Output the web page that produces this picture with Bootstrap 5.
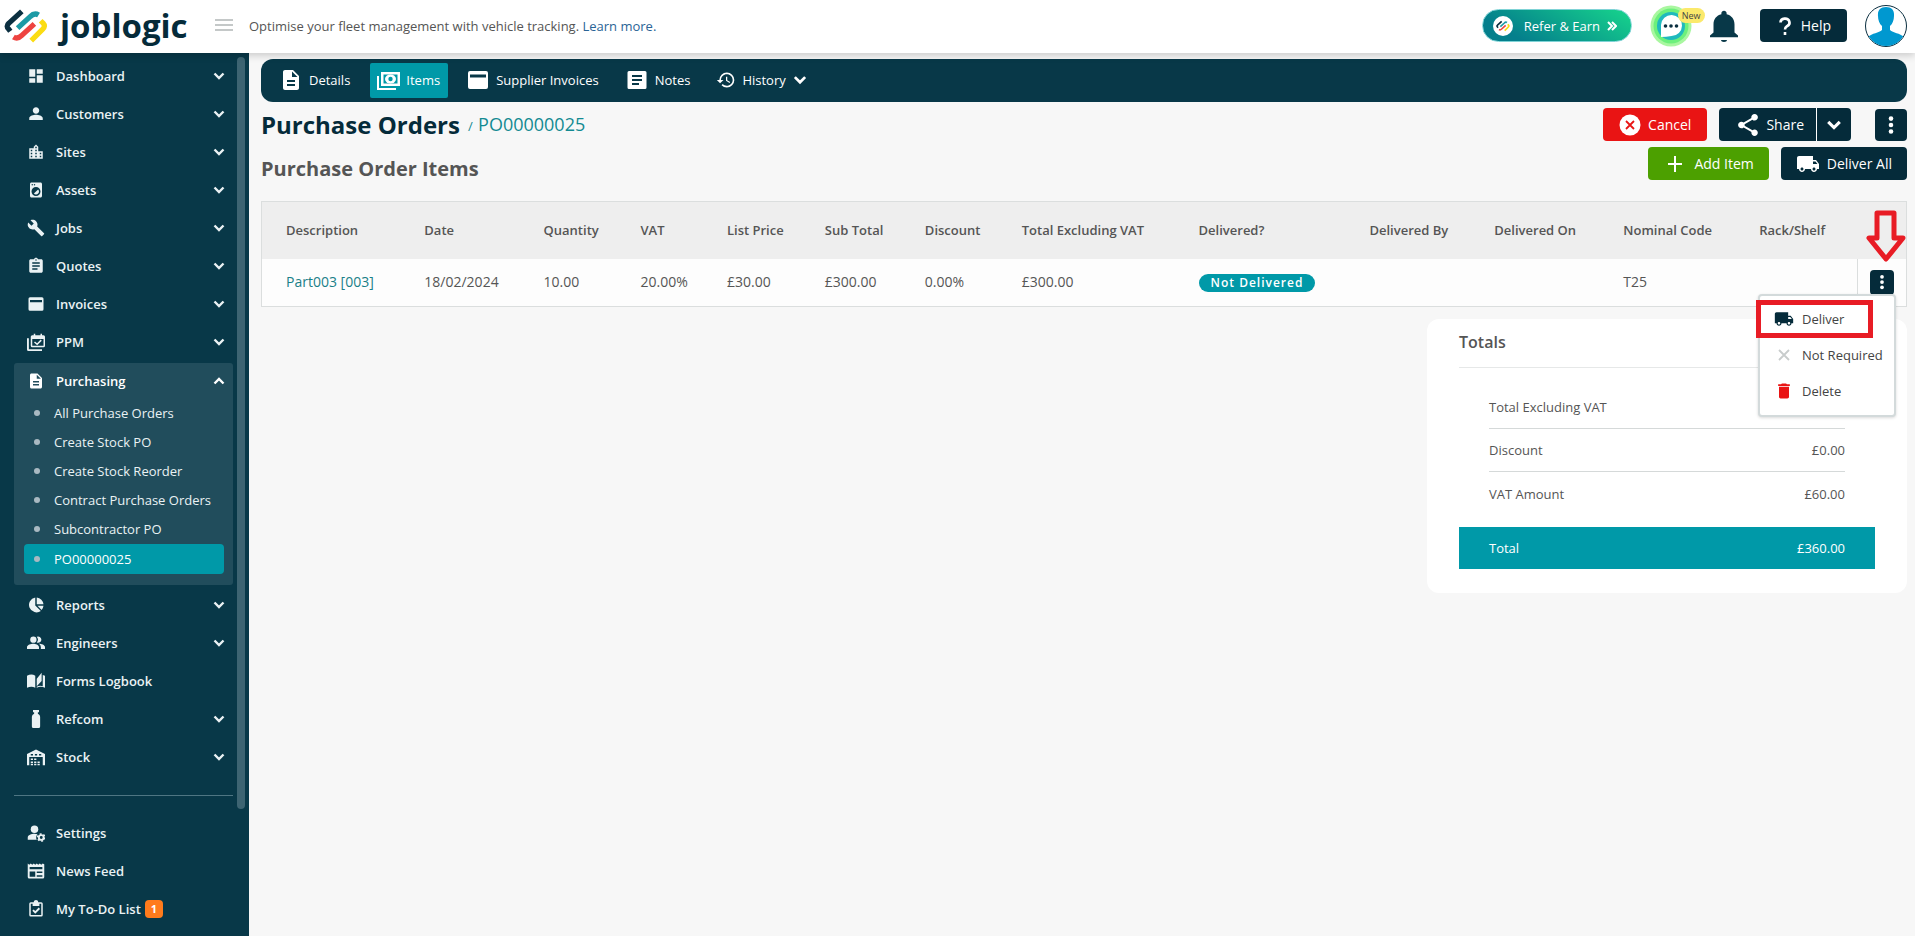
<!DOCTYPE html>
<html lang="en">
<head>
<meta charset="utf-8">
<meta name="viewport" content="width=device-width, initial-scale=1">
<title>Purchase Orders - Joblogic</title>
<link href="https://cdn.jsdelivr.net/npm/bootstrap@5.3.0/dist/css/bootstrap.min.css" rel="stylesheet">
<style>
  :root { --navy: #083848; --ink: #052b3a; --teal: #0099a8; --grey: #555; }
  body { font-family: "Open Sans", sans-serif; font-size: 13px; line-height: 20px; color: var(--grey); background: #f7f7f7; }
  a { text-decoration: none; }
  svg { display: block; flex: none; fill: currentColor; }
  .ico { width: 18px; height: 18px; }
  .ico-lg { width: 24px; height: 24px; }
  .stroke { fill: none; stroke: currentColor; stroke-width: 2; }

  .topbar { height: 53px; background: #fff; padding: 0 8px 2px 4px; box-shadow: 0 2px 8px rgba(0,0,0,.2); position: relative; z-index: 5; }
  .brand { width: 211px; color: var(--ink); }
  .brand-name { font-size: 33px; line-height: 40px; font-weight: 700; }
  .menu-btn { border: 0; background: none; padding: 0; color: #c4c8c8; }
  .topbar a.more { color: #2a6496; }
  .tools { gap: 18px; }
  .refer { height: 33px; width: 150px; border: 1px solid #7fd3d6; background: linear-gradient(30deg, #047f8c 20%, #17d58c); color: #fff; padding: 0 14px 0 10px; gap: 11px; font-weight: 500; }
  .refer .more-arrow { margin-left: -4px; }
  .chat { width: 42px; height: 42px; border: 0; padding: 0; background: none; position: relative; }
  .chat span { position: absolute; left: 28px; top: 3px; background: #fbe96b; color: #444; font-size: 9px; line-height: 15px; border-radius: 8px; padding: 0 4px; }
  .bell { color: var(--navy); }

  .cmd { height: 33px; border: 0; border-radius: 4px; color: #fff; background: var(--ink); font-size: 14px; font-weight: 500; display: flex; align-items: center; justify-content: center; gap: 7px; padding: 0 16px; }
  .cmd-red { background: #e91414; }
  .cmd-green { background: #4ca000; }
  .cmd-share { padding: 0 12px 0 18px; }
  .cmd-row { padding: 0 15px; }

  .side { width: 249px; min-height: calc(100vh - 53px); background: var(--navy); padding: 4px 4px 8px 14px; }
  .side-scroll { width: 8px; height: 752px; border-radius: 4px; background: #3d6472; }
  .side a { color: #eaf2f4; font-weight: 600; }
  .side-link { height: 38px; display: flex; align-items: center; gap: 11px; padding: 0 7px 0 13px; }
  .side-link .chev { margin-left: auto; }
  .chev { width: 14px; height: 14px; }
  .side-group { background: #214d5c; border-radius: 3px; margin: 2px 0 1px; padding-bottom: 11px; }
  .side-group .side-link { height: 35px; }
  .side .sub { font-weight: 400; height: 29px; display: flex; align-items: center; gap: 14px; margin: 0 9px 0 10px; padding-left: 10px; border-radius: 4px; }
  .sub::before { content: ""; width: 6px; height: 6px; border-radius: 50%; background: #a9b9c2; }
  .side .sub.on { height: 30px; margin-top: 1px; background: var(--teal); color: #fff; }
  .side hr { margin: 19px 0 18px; color: #7fa0ab; opacity: .6; }
  .todo { background: #ff7b1c; color: #fff; font-size: 11px; line-height: 18px; width: 18px; border-radius: 4px; font-weight: 700; text-align: center; margin-left: -7px; }

  main { padding: 6px 8px 0 12px; }
  .tabs { height: 43px; background: var(--navy); border-radius: 12px; padding: 0 12px 1px; gap: 12px; }
  .tabs a { height: 35px; display: flex; align-items: center; gap: 6px; color: #fff; padding: 0 8px 0 6px; border-radius: 2px; font-weight: 500; }
  .tabs a.on { background: var(--teal); }
  .head-row { margin-top: 6px; }
  h1 { font-size: 24px; line-height: 32px; font-weight: 700; color: var(--ink); margin: 0; }
  h2 { font-size: 20px; line-height: 28px; font-weight: 700; margin: 0; }
  .crumb { color: #138a92; }
  .crumb a { color: inherit; font-size: 18px; margin-left: 2px; }
  .dots { width: 32px; height: 32px; padding: 0; }

  .grid { width: 100%; table-layout: fixed; border: 1px solid #dbdede; margin-top: 18px; background: #fdfdfd; }
  .grid th { height: 57px; padding: 0 0 0 24px; font-weight: 600; background: #eee; white-space: nowrap; position: relative; }
  .grid td { height: 48px; padding: 0 0 0 24px; font-size: 14px; white-space: nowrap; }
  .grid td a { color: #1a8088; }
  .grid td.act { border-left: 1px solid #dbdede; padding: 0 0 0 12px; position: relative; }
  .act .cmd { width: 24px; height: 25px; padding: 0; }
  .pill { background: var(--teal); color: #fff; font-size: 12px; line-height: 18px; font-weight: 600; border-radius: 9px; padding: 0 12px; letter-spacing: 1px; display: inline-block; vertical-align: middle; }
  .arrow { position: absolute; left: 8px; top: 8px; z-index: 2; }
  .row-menu { position: absolute; right: 10px; top: 35px; width: 138px; height: 123px; background: #fff; border: 2px solid #d3dadb; border-radius: 4px; padding: 5px 0; z-index: 3; box-shadow: 0 1px 3px rgba(0,0,0,.15); }
  .row-menu button { display: flex; align-items: center; gap: 8px; width: 100%; height: 36px; border: 0; background: none; color: #444; font-size: 13px; padding: 0 0 0 14px; }
  .hilite { position: absolute; left: -4px; top: 4px; width: 117px; height: 38px; border: 5px solid #e81c25; pointer-events: none; }
  .ink { color: var(--ink); }
  .danger-ico { color: #e91414; }

  .totals { width: 480px; background: #fff; border-radius: 12px; padding: 8px 32px 24px; margin: 12px 0 0 auto; }
  .totals h3 { font-size: 16px; line-height: 30px; font-weight: 600; margin: 0; padding-bottom: 10px; border-bottom: 1px solid #e6e8e8; }
  .totals dl { margin: 18px 30px 12px; }
  .totals dl div { height: 43px; display: flex; justify-content: space-between; align-items: center; border-bottom: 1px solid #d5d9d9; }
  .totals dl div:last-child { border: 0; }
  .totals dt, .totals dd { font-weight: 400; margin: 0; }
  .sum { height: 42px; background: var(--teal); color: #fff; font-weight: 500; padding: 0 30px; }
</style>
</head>
<body>
<svg width="0" height="0" class="position-absolute" aria-hidden="true">
  <symbol id="down" viewBox="0 0 14 14"><path d="M2.500 4.500 7 9l4.500-4.500" fill="none" stroke="currentColor" stroke-width="2.400"/></symbol>
  <symbol id="up" viewBox="0 0 14 14"><path d="M2.500 9.500 7 5l4.500 4.500" fill="none" stroke="currentColor" stroke-width="2.400"/></symbol>
  <symbol id="mark-s" viewBox="0 0 42 34">
    <g fill="none" stroke-width="5" stroke-linejoin="round">
      <path d="M17 3 4.500 14.500Q1.500 17 4.500 20L6 22" stroke="#0b2f40"/>
      <path d="M13 19 25 8Q29 4 33 6.500" stroke="#1c9aa5"/>
      <path d="M29 15 17 26Q13 30 9 27.500" stroke="#ee4340"/>
      <path d="M35 12 37.500 14.500Q40 17 37 20L26 31" stroke="#fbdc12"/>
    </g>
  </symbol>
  <symbol id="doc" viewBox="0 0 24 24"><path d="M14 2H6c-1.100 0-2 .9-2 2v16c0 1.100.9 2 2 2h12c1.100 0 2-.9 2-2V8l-6-6zm2 16H8v-2h8v2zm0-4H8v-2h8v2zm-3-5V3.500L18.500 9H13z"/></symbol>
  <symbol id="card-i" viewBox="0 0 24 24"><path d="M20 3H4a2 2 0 0 0-2 2v14a2 2 0 0 0 2 2h16a2 2 0 0 0 2-2V5a2 2 0 0 0-2-2zm0 6.500H4v-3h16z"/></symbol>
  <symbol id="truck" viewBox="0 0 24 24"><path d="M20 8h-3V4H3c-1.100 0-2 .9-2 2v11h2c0 1.660 1.340 3 3 3s3-1.340 3-3h6c0 1.660 1.340 3 3 3s3-1.340 3-3h2v-5l-3-4zM6 18.500c-.83 0-1.500-.67-1.500-1.500s.67-1.500 1.500-1.500 1.500.67 1.500 1.500-.67 1.500-1.500 1.500zm13.500-9l1.960 2.500H17V9.500h2.500zm-1.500 9c-.83 0-1.500-.67-1.500-1.500s.67-1.500 1.500-1.500 1.500.67 1.500 1.500-.67 1.500-1.500 1.500z"/></symbol>
  <symbol id="kebab" viewBox="0 0 24 24"><circle cx="12" cy="5" r="2.500"/><circle cx="12" cy="12" r="2.500"/><circle cx="12" cy="19" r="2.500"/></symbol>
</svg>

<header class="topbar d-flex align-items-center">
  <a href="#" class="brand d-flex align-items-center">
    <svg width="44" height="36"><use href="#mark-s"/></svg>
    <span class="brand-name ms-2 ps-1">joblogic</span>
  </a>
  <button class="menu-btn" aria-label="Toggle menu"><svg width="18" height="14" viewBox="0 0 18 14"><path d="M0 0h18v2H0zM0 5h18v2H0zM0 10h18v2H0z"/></svg></button>
  <span class="ms-3">Optimise your fleet management with vehicle tracking. <a class="more" href="#">Learn more.</a></span>
  <div class="tools ms-auto d-flex align-items-center">
    <button class="refer rounded-pill d-flex align-items-center">
      <svg width="20" height="20" viewBox="0 0 20 20"><circle cx="10" cy="10" r="10" fill="#fff"/><use href="#mark-s" x="3" y="4" width="14" height="12"/></svg>
      <span class="text-nowrap">Refer &amp; Earn</span>
      <svg width="10" height="10" viewBox="0 0 10 10" class="stroke more-arrow"><path d="M1 1l4 4-4 4M5 1l4 4-4 4"/></svg>
    </button>
    <button class="chat" aria-label="Chat">
      <svg width="42" height="42" viewBox="0 0 42 42">
        <circle cx="21" cy="21" r="20.500" fill="#a9f7a0"/><circle cx="21" cy="21" r="17.500" fill="#6df07c"/>
        <circle cx="21" cy="21" r="14" fill="#1fb9bd"/><path d="M11 32V20a10.500 10.500 0 1 1 10.500 11Q16 32 11 32z" fill="#fff"/>
        <g fill="#0b2f40"><circle cx="15.500" cy="21" r="1.800"/><circle cx="21" cy="21" r="1.800"/><circle cx="26.500" cy="21" r="1.800"/></g>
      </svg>
      <span>New</span>
    </button>
    <button class="menu-btn bell" aria-label="Notifications"><svg width="28" height="32" viewBox="4 2 16 20" preserveAspectRatio="none"><path d="M12 22c1 0 1.700-.5 1.700-1.200h-3.400c0 .7.700 1.200 1.700 1.200zm6-6v-5c0-3.070-1.640-5.640-4.500-6.320V4c0-.83-.67-1.500-1.500-1.500s-1.500.67-1.500 1.500v.68C7.630 5.360 6 7.920 6 11v5l-2 2v1h16v-1l-2-2z"/></svg></button>
    <button class="cmd ms-1"><svg width="18" height="20" viewBox="0 0 18 20" class="stroke"><path d="M4.500 6.500a4.500 4 0 1 1 6.500 3.700q-2 1.300-2 3.300M9 16v3" stroke-width="2.600"/></svg>Help</button>
    <a href="#" aria-label="Account"><svg width="42" height="42" viewBox="0 0 42 42"><clipPath id="round"><circle cx="21" cy="21" r="20"/></clipPath><circle cx="21" cy="21" r="20.500" fill="#fff" stroke="#0b2f40"/><path clip-path="url(#round)" d="M21 2c-6 0-8.500 3.500-8 9 0 4 1.500 8 4 10v4c-3 3-10 3-14 7v10h36V32c-4-4-11-4-14-7v-4c2.500-2 4-6 4-10 .5-5.500-2-9-8-9z" fill="#0098d0"/></svg></a>
  </div>
</header>

<div class="d-flex">
  <aside class="side d-flex flex-shrink-0">
    <nav class="flex-grow-1 me-1" aria-label="Main">
      <a href="#" class="side-link"><svg class="ico" viewBox="0 0 24 24"><path d="M3 13h8V3H3v10zm0 8h8v-6H3v6zm10 0h8V11h-8v10zm0-18v6h8V3h-8z"/></svg>Dashboard<svg class="chev"><use href="#down"/></svg></a>
      <a href="#" class="side-link"><svg class="ico" viewBox="0 0 24 24"><path d="M12 11.500c2.500 0 4.300-1.800 4.300-4.200S14.500 3 12 3 7.700 4.900 7.700 7.300s1.800 4.200 4.300 4.200zM12 13c-3 0-9 1.500-9 4.500V20h18v-2.500c0-3-6-4.500-9-4.500z"/></svg>Customers<svg class="chev"><use href="#down"/></svg></a>
      <a href="#" class="side-link"><svg class="ico" viewBox="0 0 24 24"><path fill-rule="evenodd" d="M15 11V5l-3-3-3 3v2H3v14h18V11h-6zm-8 8H5v-2h2v2zm0-4H5v-2h2v2zm0-4H5V9h2v2zm6 8h-2v-2h2v2zm0-4h-2v-2h2v2zm0-4h-2V9h2v2zm0-4h-2V5h2v2zm6 12h-2v-2h2v2zm0-4h-2v-2h2v2z"/></svg>Sites<svg class="chev"><use href="#down"/></svg></a>
      <a href="#" class="side-link"><svg class="ico" viewBox="0 0 24 24"><path d="M9.170 16.830c1.560 1.560 4.100 1.560 5.660 0 1.560-1.560 1.560-4.100 0-5.660l-5.660 5.660zM18 2H6c-1.110 0-2 .89-2 2v16c0 1.110.89 2 2 2h12c1.110 0 2-.89 2-2V4c0-1.110-.89-2-2-2zM10 4c.55 0 1 .45 1 1s-.45 1-1 1-1-.45-1-1 .45-1 1-1zM7 4c.55 0 1 .45 1 1s-.45 1-1 1-1-.45-1-1 .45-1 1-1zm5 16c-3.310 0-6-2.690-6-6s2.690-6 6-6 6 2.690 6 6-2.690 6-6 6z"/></svg>Assets<svg class="chev"><use href="#down"/></svg></a>
      <a href="#" class="side-link"><svg class="ico" viewBox="0 0 24 24"><path d="M22.700 19l-9.100-9.100c.9-2.300.4-5-1.500-6.900-2-2-5-2.400-7.400-1.300L9 6 6 9 1.600 4.700C.4 7.100.9 10.100 2.900 12.100c1.900 1.900 4.600 2.400 6.900 1.500l9.100 9.100c.4.4 1 .4 1.400 0l2.300-2.300c.5-.4.5-1.100.1-1.400z"/></svg>Jobs<svg class="chev"><use href="#down"/></svg></a>
      <a href="#" class="side-link"><svg class="ico" viewBox="0 0 24 24"><path d="M19 3h-4.180C14.400 1.840 13.300 1 12 1c-1.300 0-2.400.84-2.820 2H5c-1.100 0-2 .9-2 2v14c0 1.100.9 2 2 2h14c1.100 0 2-.9 2-2V5c0-1.100-.9-2-2-2zm-7 0c.55 0 1 .45 1 1s-.45 1-1 1-1-.45-1-1 .45-1 1-1zm2 14H7v-2h7v2zm3-4H7v-2h10v2zm0-4H7V7h10v2z"/></svg>Quotes<svg class="chev"><use href="#down"/></svg></a>
      <a href="#" class="side-link"><svg class="ico"><use href="#card-i"/></svg>Invoices<svg class="chev"><use href="#down"/></svg></a>
      <a href="#" class="side-link"><svg class="ico" viewBox="0 0 24 24"><path fill-rule="evenodd" d="M22 3h-2V1h-2v2h-7V1H9v2H7a2 2 0 0 0-2 2v12a2 2 0 0 0 2 2h15a2 2 0 0 0 2-2V5a2 2 0 0 0-2-2zm0 14H7V8h15zM0 7h2.500v14.500H20V24H2a2 2 0 0 1-2-2z"/><path class="stroke" d="m10 12 3.500 3 5.500-5.500"/></svg>PPM<svg class="chev"><use href="#down"/></svg></a>
      <div class="side-group">
        <a href="#" class="side-link text-white" aria-expanded="true"><svg class="ico"><use href="#doc"/></svg>Purchasing<svg class="chev"><use href="#up"/></svg></a>
        <a href="#" class="sub">All Purchase Orders</a>
        <a href="#" class="sub">Create Stock PO</a>
        <a href="#" class="sub">Create Stock Reorder</a>
        <a href="#" class="sub">Contract Purchase Orders</a>
        <a href="#" class="sub">Subcontractor PO</a>
        <a href="#" class="sub on" aria-current="page">PO00000025</a>
      </div>
      <a href="#" class="side-link"><svg class="ico" viewBox="0 0 24 24"><path d="M11 2v10.500l7.500 7.500A10 10 0 1 1 11 2zM13 2a10 10 0 0 1 9 9h-9zM14 13h8a10 10 0 0 1-2.500 5.500z"/></svg>Reports<svg class="chev"><use href="#down"/></svg></a>
      <a href="#" class="side-link"><svg class="ico" viewBox="0 0 24 24"><circle cx="8.500" cy="7.500" r="4.200"/><path d="M13 3.800a4.200 4.200 0 1 1 0 7.400 5.500 5.500 0 0 0 0-7.400zM8.500 13C5.500 13 0 14.500 0 17.500V20h16v-2.500c0-3-5-4.500-7.500-4.500zM16 13q2.500 1.800 2.500 4.500V20H24v-2.500c0-3-5-4.500-8-4.500z"/></svg>Engineers<svg class="chev"><use href="#down"/></svg></a>
      <a href="#" class="side-link"><svg class="ico" viewBox="0 0 24 24"><path fill-rule="evenodd" d="M0 5q6-3.500 11 0v16q-5-3-11 0zM13 9l6.500-8v11L13 19zM21 4l3 1v16q-6-3-11 0v-1.500q4-1.800 8-.5z"/></svg>Forms Logbook</a>
      <a href="#" class="side-link"><svg class="ico" viewBox="0 0 24 24"><path d="M8 0h8v3h-1.500v2q3 1 3 4v13q0 2-2 2h-7q-2 0-2-2V9q0-3 3-4V3H8z"/></svg>Refcom<svg class="chev"><use href="#down"/></svg></a>
      <a href="#" class="side-link"><svg class="ico" viewBox="0 0 24 24"><path fill-rule="evenodd" d="M12 2 0 8v15h3V12h18v11h3V8zM5 8h3v2H5zm5.500 0h3v2h-3zM16 8h3v2h-3z"/><path d="M5 14h3v2H5zm4.500 0h3v2h-3zM5 18h3v2H5zm4.500 0h3v2h-3zM14 18h3v2h-3zM5 21h3v2H5zm4.500 0h3v2h-3zM14 21h3v2h-3z"/></svg>Stock<svg class="chev"><use href="#down"/></svg></a>
      <hr>
      <a href="#" class="side-link"><svg class="ico" viewBox="0 0 24 24"><circle cx="10" cy="7" r="5"/><path d="M10 13c-4 0-9 1.500-9 5v3h12q-2-4 1-7.500Q12 13 10 13z"/><circle cx="19" cy="18" r="3.200" fill="none" stroke="currentColor" stroke-width="2.500"/><circle cx="19" cy="18" r="4.800" fill="none" stroke="currentColor" stroke-width="2" stroke-dasharray="2.500 2.500"/></svg>Settings</a>
      <a href="#" class="side-link"><svg class="ico" viewBox="0 0 24 24"><path fill-rule="evenodd" d="M1 2l2 1.500L5 2l2 1.500L9 2l2 1.500L13 2l2 1.500L17 2l2 1.500L21 2l2 1v17a2 2 0 0 1-2 2H3a2 2 0 0 1-2-2zm2.500 4.500v3h17v-3zm0 6v7H11v-7zm9.500 0v2.200h7.500v-2.200zm0 5v2h7.500v-2z"/></svg>News Feed</a>
      <a href="#" class="side-link"><svg class="ico" viewBox="0 0 24 24"><path fill-rule="evenodd" d="M19 3h-4c0-4-6-4-6 0H5a2 2 0 0 0-2 2v15a2 2 0 0 0 2 2h14a2 2 0 0 0 2-2V5a2 2 0 0 0-2-2zm0 17H5V5h2.500v3h9V5H19z"/><path d="m8 13.500 3 3 5.500-5.500" fill="none" stroke="currentColor" stroke-width="2.500"/></svg>My To-Do List <span class="todo">1</span></a>
    </nav>
    <div class="side-scroll"></div>
  </aside>

  <main class="flex-grow-1">
    <nav class="tabs d-flex align-items-center" aria-label="Purchase order">
      <a href="#"><svg class="ico-lg" viewBox="0 0 24 24"><use href="#doc"/></svg>Details</a>
      <a href="#" class="on" aria-current="page"><svg class="ico-lg" viewBox="0 0 24 24"><path fill-rule="evenodd" d="M5 4h19v14H5zm2.500 2.500v9h14v-9z"/><ellipse cx="14.500" cy="11" rx="5.500" ry="4.500"/><circle cx="14.500" cy="11" r="2.200" fill="#0099a8"/><path d="M1 8h2v12h17v2H1z"/></svg>Items</a>
      <a href="#"><svg class="ico-lg"><use href="#card-i"/></svg>Supplier Invoices</a>
      <a href="#"><svg class="ico-lg" viewBox="0 0 24 24"><path fill-rule="evenodd" d="M4 3h16a1.500 1.500 0 0 1 1.500 1.500v15A1.500 1.500 0 0 1 20 21H4a1.500 1.500 0 0 1-1.500-1.500v-15A1.500 1.500 0 0 1 4 3zm3 4v2h10V7zm0 4v2h10v-2zm0 4v2h7v-2z"/></svg>Notes</a>
      <a href="#"><svg width="20" height="20" viewBox="0 0 24 24"><path d="M13 3a9 9 0 0 0-9 9H1l3.900 4L9 12H6c0-3.870 3.130-7 7-7s7 3.130 7 7-3.130 7-7 7c-1.930 0-3.680-.79-4.940-2.060l-1.420 1.420A8.950 8.950 0 0 0 13 21a9 9 0 0 0 0-18zm-1 5v5l4.280 2.540.72-1.210-3.500-2.080V8H12z"/></svg>History<svg width="16" height="16"><use href="#down"/></svg></a>
    </nav>

    <div class="head-row d-flex align-items-center justify-content-between">
      <div class="d-flex align-items-center gap-2"><h1>Purchase Orders</h1><span class="crumb">/ <a href="#">PO00000025</a></span></div>
      <div class="d-flex align-items-center">
        <button class="cmd cmd-red me-2"><svg width="22" height="22" viewBox="0 0 22 22"><circle cx="11" cy="11" r="10.500"/><path d="m7 7 8 8m0-8-8 8" stroke="#e91414" stroke-width="1.800"/></svg>Cancel</button>
        <div class="btn-group ms-1">
          <button class="cmd cmd-share rounded-end-0"><svg width="22" height="22" viewBox="2 2 20 20"><path d="M18 16.080c-.76 0-1.440.3-1.960.77L8.910 12.700c.05-.23.09-.46.09-.7s-.04-.47-.09-.7l7.050-4.110c.54.5 1.250.81 2.040.81 1.660 0 3-1.340 3-3s-1.340-3-3-3-3 1.340-3 3c0 .24.04.47.09.7L8.040 9.810C7.500 9.310 6.790 9 6 9c-1.660 0-3 1.340-3 3s1.340 3 3 3c.79 0 1.500-.31 2.040-.81l7.120 4.160c-.05.21-.08.43-.08.65 0 1.610 1.310 2.920 2.920 2.920s2.920-1.310 2.920-2.920-1.310-2.920-2.920-2.920z"/></svg>Share</button>
          <button class="cmd rounded-start-0 px-2 border-start border-white" aria-label="More share options"><svg width="18" height="18"><use href="#down"/></svg></button>
        </div>
        <button class="cmd dots ms-4" aria-label="More actions"><svg width="24" height="22" viewBox="0 0 24 24"><use href="#kebab"/></svg></button>
      </div>
    </div>
    <div class="head-row d-flex align-items-start justify-content-between">
      <h2 class="pt-2">Purchase Order Items</h2>
      <div class="d-flex">
        <button class="cmd cmd-row cmd-green me-2"><svg width="24" height="18" viewBox="0 0 24 18"><path d="M11 1h2v7h6v2h-6v7h-2v-7H5V8h6z"/></svg>Add Item</button>
        <button class="cmd cmd-row ms-1"><svg class="ico-lg"><use href="#truck"/></svg>Deliver All</button>
      </div>
    </div>

    <table class="grid">
      <colgroup>
        <col style="width:8.44%"><col style="width:7.25%"><col style="width:5.89%"><col style="width:5.26%"><col style="width:5.95%"><col style="width:6.08%"><col style="width:5.89%"><col style="width:10.75%"><col style="width:10.39%"><col style="width:7.59%"><col style="width:7.84%"><col style="width:8.26%"><col style="width:7.45%"><col style="width:2.96%">
      </colgroup>
      <thead><tr><th>Description</th><th>Date</th><th>Quantity</th><th>VAT</th><th>List Price</th><th>Sub Total</th><th>Discount</th><th>Total Excluding VAT</th><th>Delivered?</th><th>Delivered By</th><th>Delivered On</th><th>Nominal Code</th><th>Rack/Shelf</th><th aria-label="Actions"><svg class="arrow" width="40" height="52" viewBox="0 0 40 52"><path d="M11 3h17v25h9L20 49 3 28h8z" fill="none" stroke="#e81c25" stroke-width="5" stroke-linejoin="round"/></svg></th></tr></thead>
      <tbody><tr><td><a href="#">Part003 [003]</a></td><td>18/02/2024</td><td>10.00</td><td>20.00%</td><td>£30.00</td><td>£300.00</td><td>0.00%</td><td>£300.00</td><td><span class="pill">Not Delivered</span></td><td></td><td></td><td>T25</td><td></td>
        <td class="act"><button class="cmd" aria-label="Row actions" aria-expanded="true"><svg width="20" height="18"><use href="#kebab"/></svg></button>
          <div class="row-menu">
            <button><svg class="ink" width="20" height="20"><use href="#truck"/></svg>Deliver</button>
            <button><svg width="20" height="20" viewBox="0 0 20 20"><path d="m5 5 10 10m0-10L5 15" stroke="#c8cccc" stroke-width="1.800"/></svg>Not Required</button>
            <button><svg class="danger-ico" width="20" height="20" viewBox="0 0 24 24"><path d="M6 19c0 1.100.9 2 2 2h8c1.100 0 2-.9 2-2V7H6v12zM19 4h-3.500l-1-1h-5l-1 1H5v2h14V4z"/></svg>Delete</button>
            <div class="hilite"></div>
          </div>
        </td></tr></tbody>
    </table>

    <section class="totals">
      <h3>Totals</h3>
      <dl>
        <div><dt>Total Excluding VAT</dt><dd>£300.00</dd></div>
        <div><dt>Discount</dt><dd>£0.00</dd></div>
        <div><dt>VAT Amount</dt><dd>£60.00</dd></div>
      </dl>
      <div class="sum d-flex justify-content-between align-items-center"><span>Total</span><span>£360.00</span></div>
    </section>
  </main>
</div>
<script src="https://cdn.jsdelivr.net/npm/bootstrap@5.3.0/dist/js/bootstrap.bundle.min.js"></script>
</body>
</html>
